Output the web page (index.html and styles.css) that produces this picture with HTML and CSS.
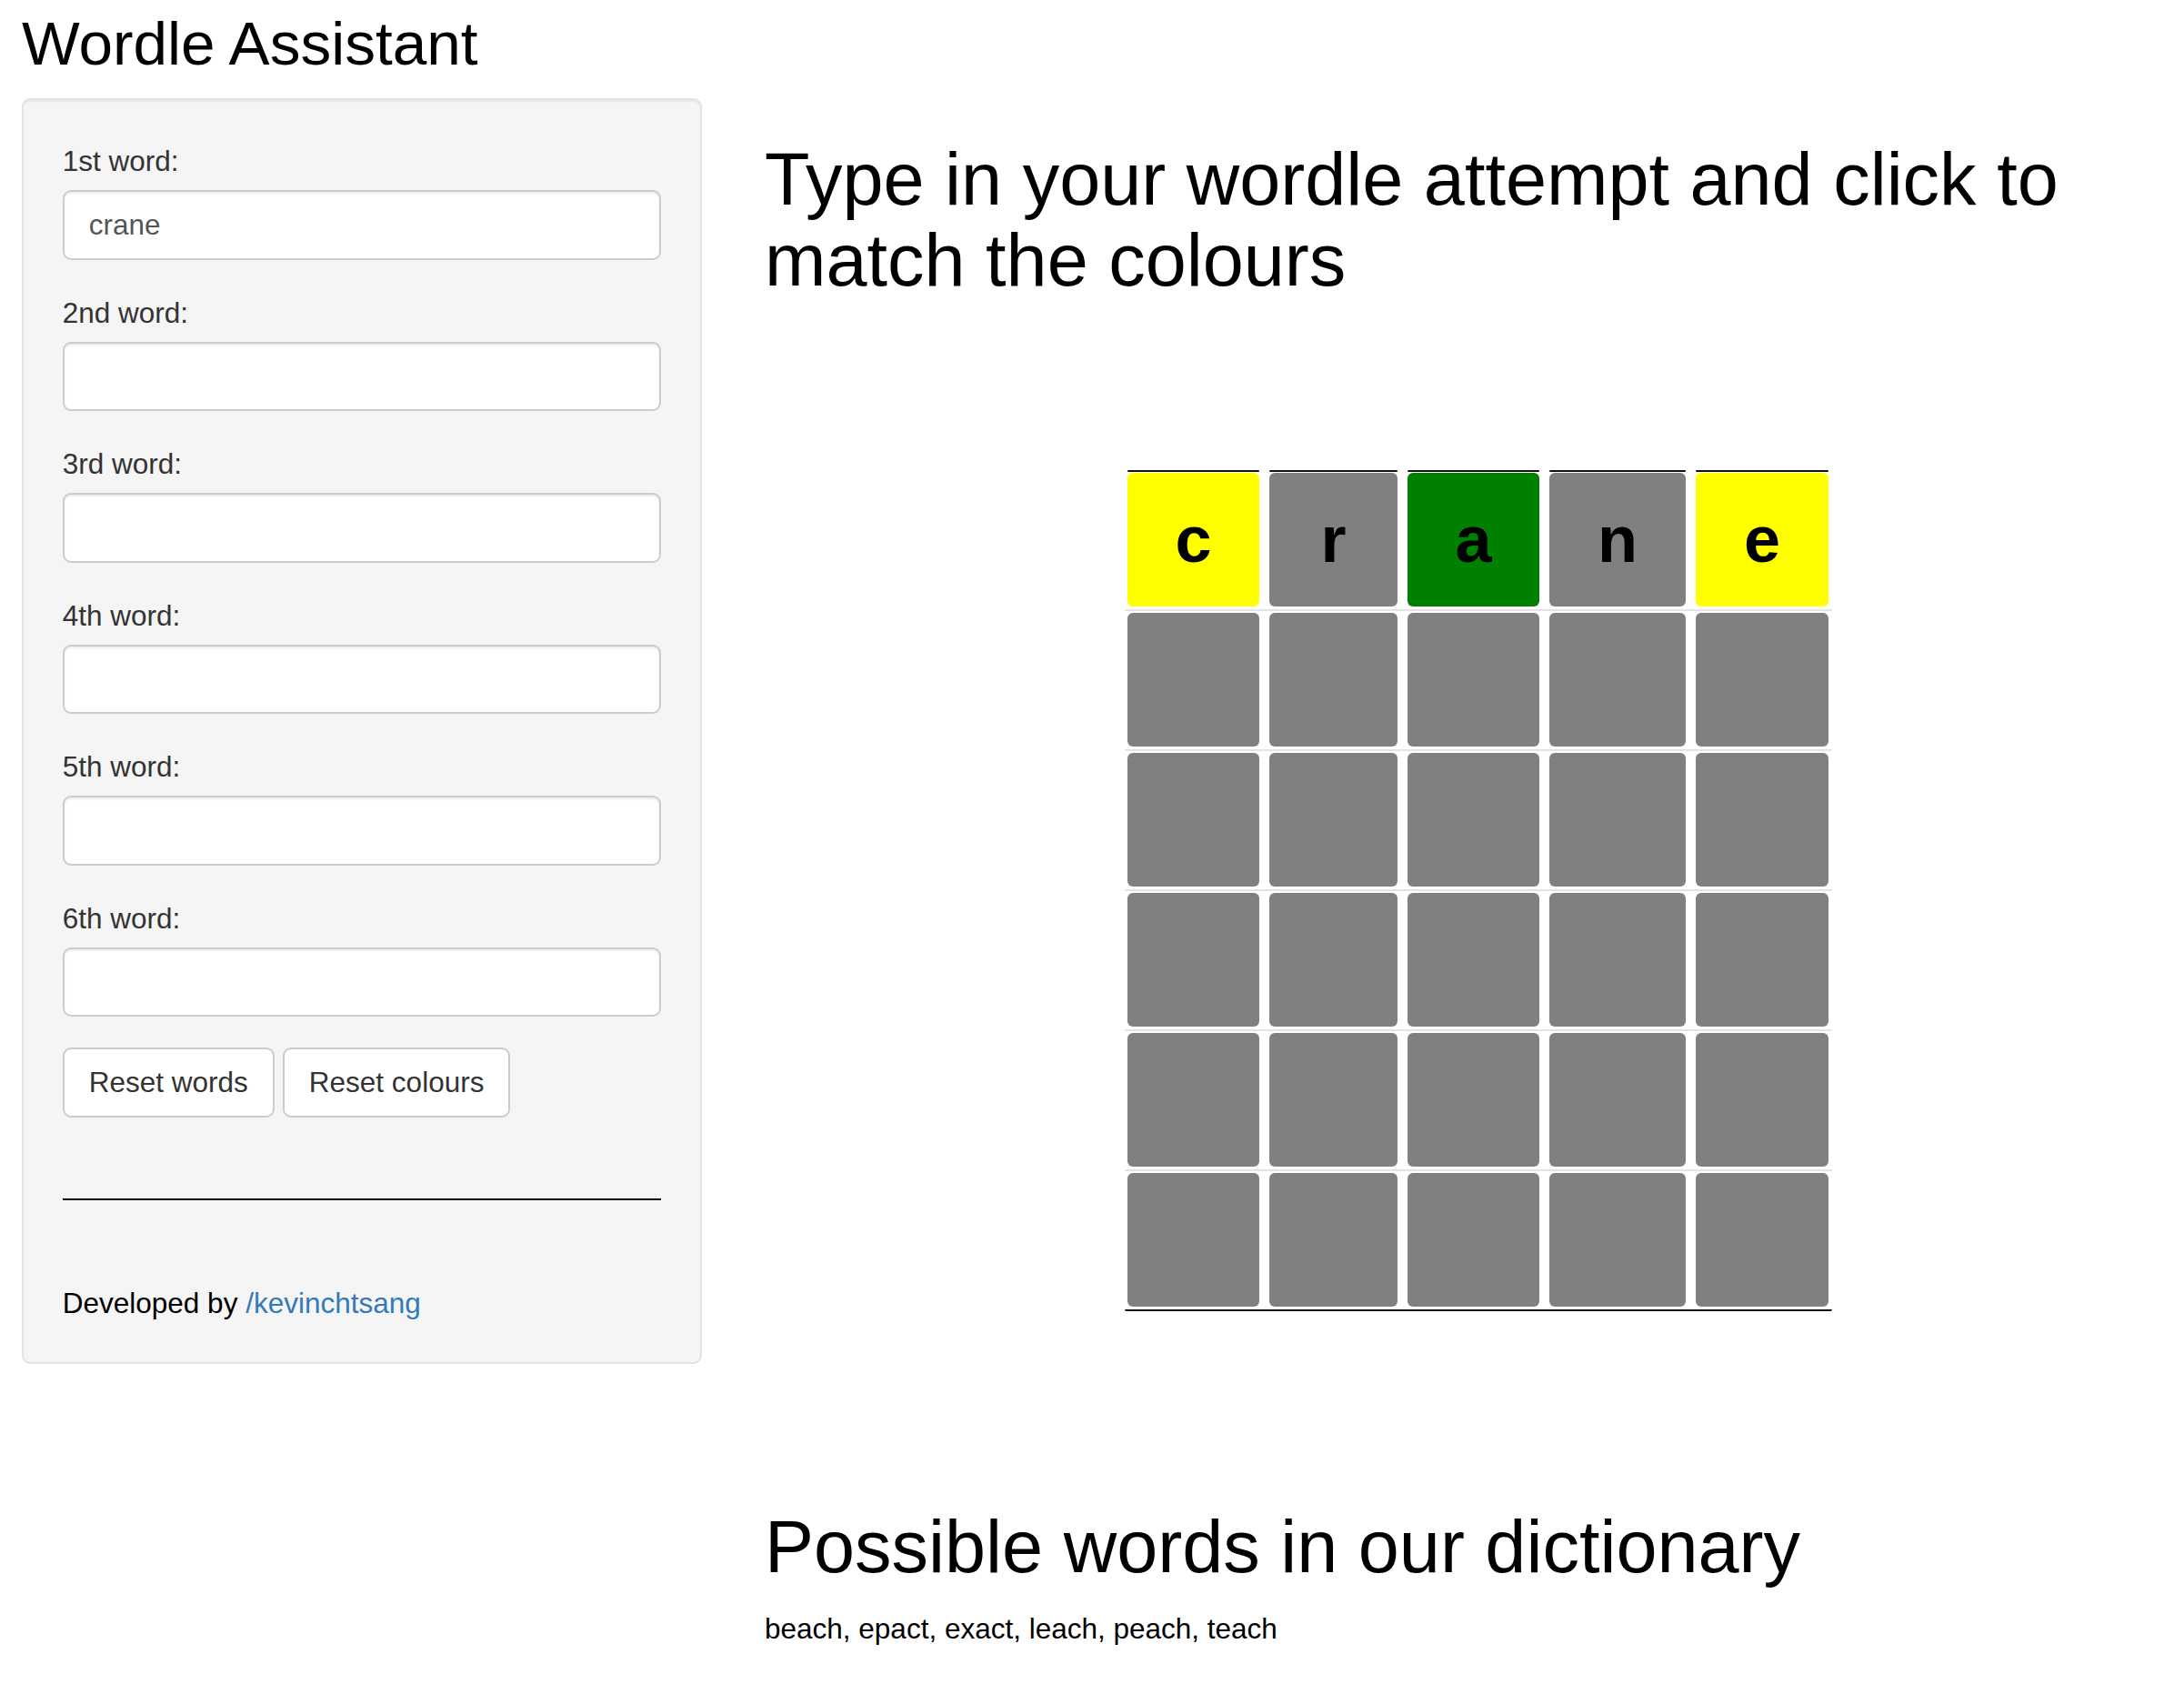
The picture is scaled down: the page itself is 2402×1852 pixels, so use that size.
FILE: index.html
```html
<!DOCTYPE html>
<html lang="en">
<head>
<meta charset="utf-8">
<title>Wordle Assistant</title>
<link rel="stylesheet" href="styles.css">
</head>
<body>
<div class="page">
  <h2 class="title">Wordle Assistant</h2>
  <div class="layout">
    <aside class="well">
      <div class="form-group">
        <label class="control-label" for="w1">1st word:</label>
        <input class="form-control" id="w1" type="text" value="crane">
      </div>
      <div class="form-group">
        <label class="control-label" for="w2">2nd word:</label>
        <input class="form-control" id="w2" type="text" value="">
      </div>
      <div class="form-group">
        <label class="control-label" for="w3">3rd word:</label>
        <input class="form-control" id="w3" type="text" value="">
      </div>
      <div class="form-group">
        <label class="control-label" for="w4">4th word:</label>
        <input class="form-control" id="w4" type="text" value="">
      </div>
      <div class="form-group">
        <label class="control-label" for="w5">5th word:</label>
        <input class="form-control" id="w5" type="text" value="">
      </div>
      <div class="form-group">
        <label class="control-label" for="w6">6th word:</label>
        <input class="form-control" id="w6" type="text" value="">
      </div>
      <div class="buttons">
        <button class="btn" type="button">Reset words</button>
        <button class="btn" type="button">Reset colours</button>
      </div>
      <hr class="rule">
      <p class="credit">Developed by <a class="credit-link" href="#">/kevinchtsang</a></p>
    </aside>
    <main class="main">
      <h1 class="heading">Type in your wordle attempt and click to match the colours</h1>
      <div class="board">
        <div class="board-head">
          <span class="head-line"></span><span class="head-line"></span><span class="head-line"></span><span class="head-line"></span><span class="head-line"></span>
        </div>
        <div class="board-row first">
          <div class="tile yellow">c</div>
          <div class="tile gray">r</div>
          <div class="tile green">a</div>
          <div class="tile gray">n</div>
          <div class="tile yellow">e</div>
        </div>
        <div class="board-row">
          <div class="tile gray"></div><div class="tile gray"></div><div class="tile gray"></div><div class="tile gray"></div><div class="tile gray"></div>
        </div>
        <div class="board-row">
          <div class="tile gray"></div><div class="tile gray"></div><div class="tile gray"></div><div class="tile gray"></div><div class="tile gray"></div>
        </div>
        <div class="board-row">
          <div class="tile gray"></div><div class="tile gray"></div><div class="tile gray"></div><div class="tile gray"></div><div class="tile gray"></div>
        </div>
        <div class="board-row">
          <div class="tile gray"></div><div class="tile gray"></div><div class="tile gray"></div><div class="tile gray"></div><div class="tile gray"></div>
        </div>
        <div class="board-row">
          <div class="tile gray"></div><div class="tile gray"></div><div class="tile gray"></div><div class="tile gray"></div><div class="tile gray"></div>
        </div>
      </div>
      <h1 class="heading">Possible words in our dictionary</h1>
      <p class="words">beach, epact, exact, leach, peach, teach</p>
    </main>
  </div>
</div>
</body>
</html>
```
FILE: styles.css
```css
* {
  box-sizing: border-box;
}

body {
  margin: 0;
  font-family: "Liberation Sans", Arial, Helvetica, sans-serif;
  font-size: 31.5px;
  line-height: 45px;
  color: #333;
  background: #fff;
}

.page {
  padding-left: 24px;
}

.title {
  margin: 11px 0 23px;
  font-size: 67.5px;
  line-height: 74.25px;
  font-weight: normal;
  color: #000;
}

.layout {
  display: flex;
  align-items: flex-start;
  gap: 69px;
}

/* Sidebar */
.well {
  flex: 0 0 748px;
  width: 748px;
  padding: 42.75px;
  background: #f5f5f5;
  border: 2px solid #e3e3e3;
  border-radius: 9px;
  box-shadow: inset 0 2px 2px rgba(0, 0, 0, 0.05);
}

.form-group {
  display: flex;
  flex-direction: column;
  margin-bottom: 33.75px;
}

.control-label {
  padding-top: 2px;
  margin-bottom: 9.25px;
  line-height: 45px;
  color: #333;
}

.form-control {
  width: 100%;
  height: 76.5px;
  padding: 13.5px 27px;
  font-family: inherit;
  font-size: 31.5px;
  line-height: 45px;
  color: #555;
  background: #fff;
  border: 2px solid #ccc;
  border-radius: 9px;
  box-shadow: inset 0 2px 2px rgba(0, 0, 0, 0.075);
  outline: none;
}

.buttons {
  display: flex;
  gap: 9px;
}

.btn {
  height: 76.5px;
  padding: 13.5px 27px;
  font-family: inherit;
  font-size: 31.5px;
  line-height: 45px;
  color: #333;
  background: #fff;
  border: 2px solid #ccc;
  border-radius: 9px;
}

.rule {
  margin: 89.5px 0 90.5px;
  height: 0;
  border: 0;
  border-top: 2px solid #000;
}

.credit {
  margin: 0;
  color: #000;
}

.credit-link {
  color: #337ab7;
  text-decoration: none;
}

/* Main column */
.main {
  flex: 1 1 auto;
  min-width: 0;
}

.heading {
  margin: 45px 0 22.5px;
  font-size: 81px;
  line-height: 89.1px;
  font-weight: normal;
  color: #000;
}

.board {
  width: 778px;
  margin: 185.5px 0 215px 396px;
  border-bottom: 2px solid #111;
  border-radius: 0 0 2px 2px;
}

.board-head,
.board-row {
  display: grid;
  grid-template-columns: 145px 141px 145px 150px 146px;
  column-gap: 11px;
  padding: 0 3px;
}

.board-head {
  margin-bottom: 1px;
}

.head-line {
  display: block;
  height: 2px;
  background: #111;
  border-radius: 1px;
}

.board-row {
  padding-top: 2px;
  padding-bottom: 3px;
  border-top: 2px solid #e4e4e4;
}

.board-row.first {
  padding-top: 0;
  border-top: 0;
}

.tile {
  height: 147px;
  border-radius: 6px;
  font-size: 72px;
  font-weight: bold;
  line-height: 147px;
  text-align: center;
  color: #000;
}

.yellow {
  background: #ffff00;
}

.gray {
  background: #808080;
}

.green {
  background: #008000;
}

.words {
  margin: 0;
  color: #000;
}
```
